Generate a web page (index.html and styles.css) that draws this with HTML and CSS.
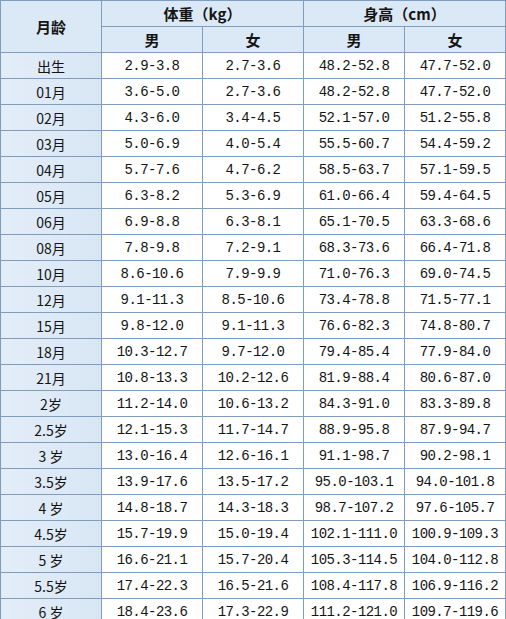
FILE: index.html
```html
<!DOCTYPE html>
<html lang="zh">
<head>
<meta charset="utf-8">
<title>儿童身高体重表</title>
<link rel="stylesheet" href="styles.css">
</head>
<body>
<table class="chart">
  <colgroup>
    <col class="col"><col class="col"><col class="col"><col class="col"><col class="col">
  </colgroup>
  <thead>
    <tr>
      <th class="age-head" rowspan="2">月龄</th>
      <th colspan="2">体重（kg）</th>
      <th colspan="2">身高（cm）</th>
    </tr>
    <tr>
      <th>男</th><th>女</th><th>男</th><th>女</th>
    </tr>
  </thead>
  <tbody>
    <tr><td class="age">出生</td><td>2.9-3.8</td><td>2.7-3.6</td><td>48.2-52.8</td><td>47.7-52.0</td></tr>
    <tr><td class="age">01月</td><td>3.6-5.0</td><td>2.7-3.6</td><td>48.2-52.8</td><td>47.7-52.0</td></tr>
    <tr><td class="age">02月</td><td>4.3-6.0</td><td>3.4-4.5</td><td>52.1-57.0</td><td>51.2-55.8</td></tr>
    <tr><td class="age">03月</td><td>5.0-6.9</td><td>4.0-5.4</td><td>55.5-60.7</td><td>54.4-59.2</td></tr>
    <tr><td class="age">04月</td><td>5.7-7.6</td><td>4.7-6.2</td><td>58.5-63.7</td><td>57.1-59.5</td></tr>
    <tr><td class="age">05月</td><td>6.3-8.2</td><td>5.3-6.9</td><td>61.0-66.4</td><td>59.4-64.5</td></tr>
    <tr><td class="age">06月</td><td>6.9-8.8</td><td>6.3-8.1</td><td>65.1-70.5</td><td>63.3-68.6</td></tr>
    <tr><td class="age">08月</td><td>7.8-9.8</td><td>7.2-9.1</td><td>68.3-73.6</td><td>66.4-71.8</td></tr>
    <tr><td class="age">10月</td><td>8.6-10.6</td><td>7.9-9.9</td><td>71.0-76.3</td><td>69.0-74.5</td></tr>
    <tr><td class="age">12月</td><td>9.1-11.3</td><td>8.5-10.6</td><td>73.4-78.8</td><td>71.5-77.1</td></tr>
    <tr><td class="age">15月</td><td>9.8-12.0</td><td>9.1-11.3</td><td>76.6-82.3</td><td>74.8-80.7</td></tr>
    <tr><td class="age">18月</td><td>10.3-12.7</td><td>9.7-12.0</td><td>79.4-85.4</td><td>77.9-84.0</td></tr>
    <tr><td class="age">21月</td><td>10.8-13.3</td><td>10.2-12.6</td><td>81.9-88.4</td><td>80.6-87.0</td></tr>
    <tr><td class="age">2岁</td><td>11.2-14.0</td><td>10.6-13.2</td><td>84.3-91.0</td><td>83.3-89.8</td></tr>
    <tr><td class="age">2.5岁</td><td>12.1-15.3</td><td>11.7-14.7</td><td>88.9-95.8</td><td>87.9-94.7</td></tr>
    <tr><td class="age">3 岁</td><td>13.0-16.4</td><td>12.6-16.1</td><td>91.1-98.7</td><td>90.2-98.1</td></tr>
    <tr><td class="age">3.5岁</td><td>13.9-17.6</td><td>13.5-17.2</td><td>95.0-103.1</td><td>94.0-101.8</td></tr>
    <tr><td class="age">4 岁</td><td>14.8-18.7</td><td>14.3-18.3</td><td>98.7-107.2</td><td>97.6-105.7</td></tr>
    <tr><td class="age">4.5岁</td><td>15.7-19.9</td><td>15.0-19.4</td><td>102.1-111.0</td><td>100.9-109.3</td></tr>
    <tr><td class="age">5 岁</td><td>16.6-21.1</td><td>15.7-20.4</td><td>105.3-114.5</td><td>104.0-112.8</td></tr>
    <tr><td class="age">5.5岁</td><td>17.4-22.3</td><td>16.5-21.6</td><td>108.4-117.8</td><td>106.9-116.2</td></tr>
    <tr><td class="age">6 岁</td><td>18.4-23.6</td><td>17.3-22.9</td><td>111.2-121.0</td><td>109.7-119.6</td></tr>
  </tbody>
</table>
</body>
</html>
```

FILE: styles.css
```css
html, body {
  margin: 0;
  padding: 0;
  background: #ffffff;
}

.chart {
  border-collapse: collapse;
  table-layout: fixed;
  width: 506px;
  color: #141414;
}

.chart .col {
  width: 101px;
}

.chart tr {
  height: 26px;
}

.chart th,
.chart td {
  border: 1px solid #7f9dbd;
  padding: 0;
  text-align: center;
  vertical-align: middle;
  white-space: nowrap;
  overflow: hidden;
}

.chart th {
  background: #dbe8f5;
  font-family: "Noto Sans CJK SC", sans-serif;
  font-weight: bold;
  font-size: 15px;
  line-height: 20px;
}

.chart td {
  font-family: "Liberation Mono", "Noto Sans CJK SC", monospace;
  font-size: 14px;
  letter-spacing: -0.55px;
  line-height: 18px;
  background: #ffffff;
}

.chart td.age {
  background: linear-gradient(to right, #e3edf8, #d8e6f4);
  font-family: "Noto Sans CJK SC", sans-serif;
  font-size: 14px;
  letter-spacing: 0;
}
```
